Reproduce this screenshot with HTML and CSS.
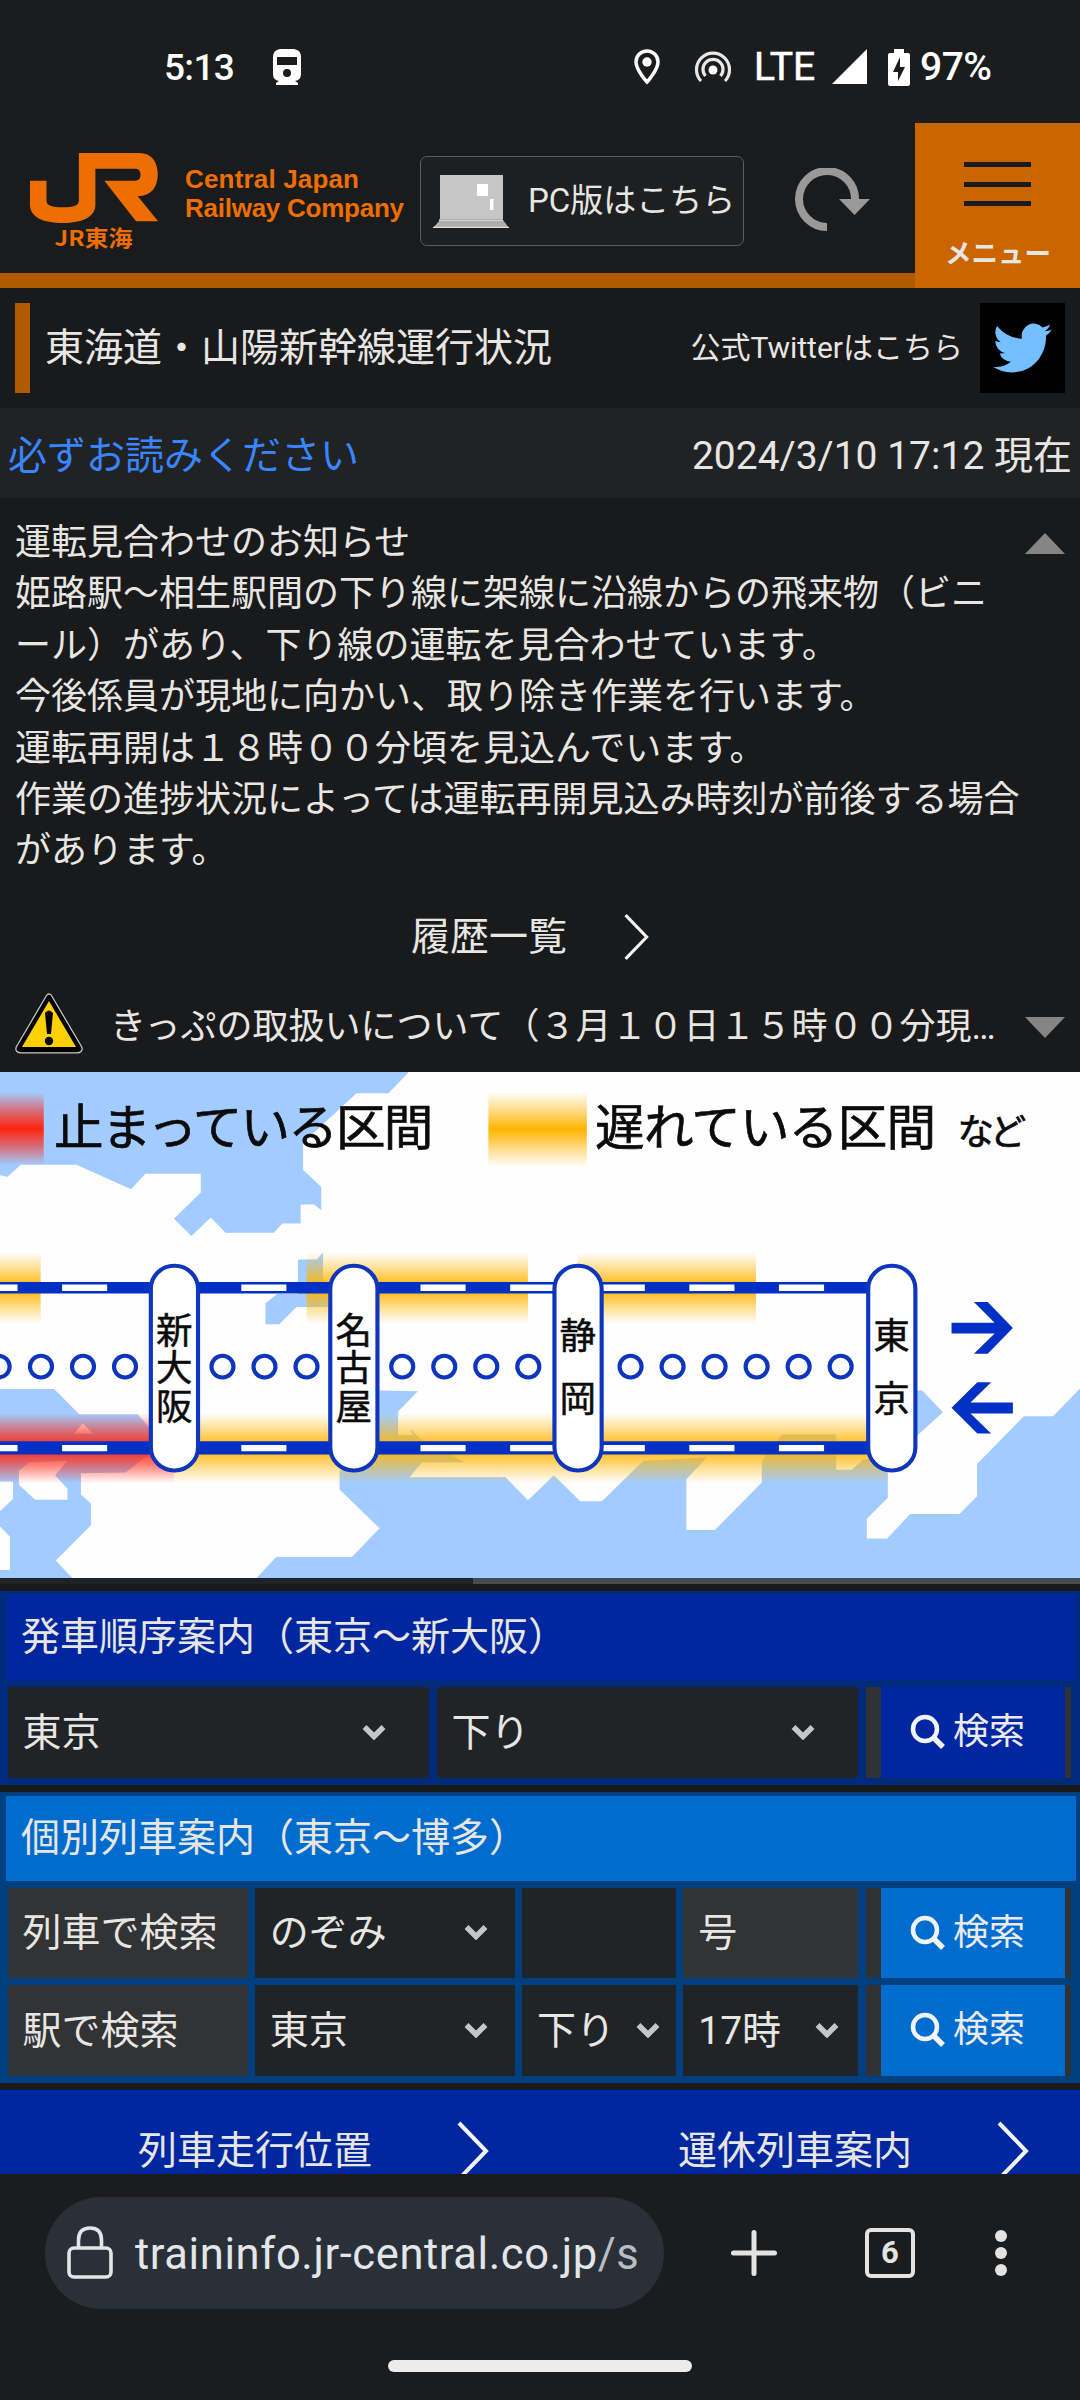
FILE: index.html
```html
<!DOCTYPE html>
<html lang="ja">
<head>
<meta charset="utf-8">
<title>東海道・山陽新幹線運行状況</title>
<link rel="stylesheet" href="styles.css">
</head>
<body>
<svg class="defs" width="0" height="0" aria-hidden="true">
  <symbol id="down" viewBox="0 0 24 16"><path d="M2.500 3 12 12.500 21.500 3" fill="none" stroke="#c4c6c7" stroke-width="5.500"/></symbol>
  <symbol id="search" viewBox="0 0 36 36"><circle cx="15" cy="15" r="12" fill="none" stroke="#f2f3f6" stroke-width="4.500"/><path d="M23.500 23.500 33 33" stroke="#f2f3f6" stroke-width="5.500"/></symbol>
  <symbol id="next" viewBox="0 0 32 60"><path d="M2 2 29 30 2 58" fill="none" stroke="#f4f4f4" stroke-width="4"/></symbol>
</svg>
<div class="screen">
  <div class="status">
    <span class="clock">5:13</span>
    <svg class="train" width="30" height="36" viewBox="0 0 30 36"><path fill="#fff" fill-rule="evenodd" d="M8 0H22Q29 1 29 8V25Q29 31 23 32L26 34V36H4V34L7 32Q1 31 1 25V8Q1 1 8 0ZM5 8V16H25V8ZM15 20A4 4 0 1 0 15 28A4 4 0 1 0 15 20Z"/></svg>
    <span class="spacer"></span>
    <svg class="pin" width="26" height="36" viewBox="0 0 26 36"><path d="M13 2C6.500 2 2 7 2 13C2 21 13 33 13 33S24 21 24 13C24 7 19.500 2 13 2Z" fill="none" stroke="#fff" stroke-width="3.500"/><circle cx="13" cy="13" r="4.700" fill="#fff"/></svg>
    <svg class="cast" width="38" height="34" viewBox="0 0 38 34"><g fill="none" stroke="#e8e8e8" stroke-width="3.200"><path d="M7 31A16.500 16.500 0 1 1 31 31"/><path d="M11.500 26A10 10 0 1 1 26.500 26"/></g><circle cx="19" cy="20" r="4.500" fill="#fff"/></svg>
    <span class="lte">LTE</span>
    <svg class="signal" width="36" height="36" viewBox="0 0 36 36"><path d="M35 0V35H0Z" fill="#fff"/></svg>
    <svg class="battery" width="22" height="37" viewBox="0 0 22 37"><path fill="#fff" d="M6 0H16V4H20Q22 4 22 6V35Q22 37 20 37H2Q0 37 0 35V6Q0 4 2 4H6Z"/><path fill="#1b1c1e" d="M12 8 5 23H10V32L17 18H12Z"/></svg>
    <span class="pct">97%</span>
  </div>

  <header class="header">
    <svg class="logo" width="410" height="150" viewBox="0 123 410 150">
      <g transform="translate(0 110) scale(.34439 .33333)"><path fill="#ee6f00" d="M229 129H405C440 129 458 155 458 193C458 232 440 258 400 259L459 334H395L303 212H392C404 212 408 203 408 194C408 184 404 176 392 176H277V285C277 320 240 339 182 339C124 339 87 320 87 285V212H135V272C135 286 150 292 182 292C214 292 229 286 229 272Z"/></g>
      <text class="logo-ja" x="54.500" y="245.500" textLength="78" lengthAdjust="spacingAndGlyphs">JR東海</text>
      <text class="logo-en" x="185" y="188" textLength="174">Central Japan</text>
      <text class="logo-en" x="185" y="217" textLength="219">Railway Company</text>
    </svg>
    <a class="pc">
      <svg width="76" height="53" viewBox="0 0 76 53"><path fill="#c6c6c6" d="M7 0H70V44H7Z"/><path fill="#adadad" d="M7 45H70L76 53H0Z"/><path d="M6 45H70M0 52.500H76" stroke="#dedede" stroke-width="1.500"/><path fill="#fff" d="M44 9H55V21H44ZM57 24H60.500V35H57Z"/></svg>
      <span>PC版はこちら</span>
    </a>
    <svg class="reload" width="76" height="64" viewBox="0 0 76 64"><path d="M32 59A28 28 0 1 1 60 32" fill="none" stroke="#999" stroke-width="8"/><path d="M44 31H75L59.500 47Z" fill="#999"/></svg>
    <a class="menu"><i></i><i></i><i></i><b>メニュー</b></a>
  </header>

  <section class="title">
    <h1>東海道・山陽新幹線運行状況</h1>
    <span class="tw-label">公式Twitterはこちら</span>
    <span class="tw"><svg width="59" height="50" viewBox="0 2 24 20" preserveAspectRatio="none"><path fill="#74bfff" d="M23.950 4.570a10 10 0 0 1-2.820.770 4.960 4.960 0 0 0 2.160-2.720 9.900 9.900 0 0 1-3.130 1.180 4.920 4.920 0 0 0-8.380 4.480A13.930 13.930 0 0 1 1.640 3.160a4.920 4.920 0 0 0 1.520 6.570 4.900 4.900 0 0 1-2.230-.610v.060a4.920 4.920 0 0 0 3.950 4.830 5 5 0 0 1-2.210.080 4.940 4.940 0 0 0 4.600 3.420A9.870 9.870 0 0 1 0 19.540a14 14 0 0 0 7.550 2.210c9.050 0 14-7.500 14-13.980 0-.210 0-.420-.020-.630a9.940 9.940 0 0 0 2.420-2.570Z"/></svg></span>
  </section>

  <div class="now"><a>必ずお読みください</a><span>2024/3/10 17:12 現在</span></div>

  <section class="notice">
    <p>運転見合わせのお知らせ<br>姫路駅～相生駅間の下り線に架線に沿線からの飛来物（ビニ<br>ール）があり、下り線の運転を見合わせています。<br>今後係員が現地に向かい、取り除き作業を行います。<br>運転再開は１８時００分頃を見込んでいます。<br>作業の進捗状況によっては運転再開見込み時刻が前後する場合<br>があります。</p>
    <svg class="fold" width="40" height="21" viewBox="0 0 40 21"><path fill="#858585" d="M20 0 40 21H0Z"/></svg>
  </section>
  <a class="history"><span>履歴一覧</span><svg width="25" height="48"><use href="#next"/></svg></a>
  <div class="ticket">
    <svg width="68" height="61" viewBox="0 0 68 61"><path d="M34 4 64 55Q65 57 62 57H6Q3 57 4 55Z" fill="#000" stroke="#c8c8c8" stroke-width="7" stroke-linejoin="round"/><path d="M34 4 64 55Q65 57 62 57H6Q3 57 4 55Z" fill="#000" stroke="#000" stroke-width="4.500" stroke-linejoin="round"/><path d="M34 8 61 54H7Z" fill="#fdd000"/><path d="M30 20Q34 15 38 20L36 41H32Z"/><circle cx="34" cy="48" r="4.200"/></svg>
    <span>きっぷの取扱いについて（３月１０日１５時００分現…</span>
    <svg class="open" width="40" height="21" viewBox="0 0 40 21"><path fill="#858585" d="M0 0H40L20 21Z"/></svg>
  </div>

  <svg class="map" width="1080" height="506" viewBox="0 36 3136 1496" preserveAspectRatio="none">
    <defs>
      <linearGradient id="amber" x1="0" y1="0" x2="0" y2="1"><stop offset="0" stop-color="#ffb400" stop-opacity="0"/><stop offset=".2" stop-color="#ffb400" stop-opacity=".38"/><stop offset=".5" stop-color="#ffb400"/><stop offset=".8" stop-color="#ffb400" stop-opacity=".38"/><stop offset="1" stop-color="#ffb400" stop-opacity="0"/></linearGradient>
      <linearGradient id="red" x1="0" y1="0" x2="0" y2="1"><stop offset="0" stop-color="#ff2410" stop-opacity="0"/><stop offset=".25" stop-color="#ff2410" stop-opacity=".55"/><stop offset=".5" stop-color="#ff2410"/><stop offset=".75" stop-color="#ff2410" stop-opacity=".55"/><stop offset="1" stop-color="#ff2410" stop-opacity="0"/></linearGradient>
    </defs>
    <path fill="#fefefe" d="M0 36H3136V1532H0Z"/>
    <g fill="#a2ccff">
      <path d="M0 36H1187L1128 99H1035L880 245V325L933 376V445L912 428H873V484H820L795 511H655L612 466 556 521 505 470 583 392V337H422L381 383 222 310H60L22 346 0 341Z"/>
      <path d="M865 590H920L938 570V650L952 670V731H861L811 782H771V720L805 692H865Z"/>
      <path d="M0 973H157L230 1048H400L440 1095V1160L365 1220 235 1222V1285L264 1312V1376L162 1480 210 1532H0Z"/>
      <path d="M1102 978 1213 980 1156 1040V1110H1200L1190 1090 1220 1120 1350 1190H1225L1190 1234H1468L1533 1302 1568 1268 1608 1228 1685 1305H1748L1868 1185 2053 1175 1993 1240V1390H2076L2212 1250V1185L2270 1108H2428V1212H2473L2508 1180H2578V1295L2517 1357V1415H2576L2643 1343H2786L2837 1290V1195L2973 1054H3058L3136 972V1532H745L802 1470H1022L1102 1385 986 1270V1215L1102 1120Z"/>
      <path d="M2655 978H2678L2738 1042 2655 1118Z"/>
    </g>
    <path fill="#fefefe" d="M0 1247H38V1298L0 1335ZM0 1380 29 1410V1508H0ZM55 1215 85 1190 195 1185 160 1228 196 1268V1301H102L55 1256ZM215 1105 240 1075 270 1105Z"/>
    <rect fill="url(#red)" y="95" width="127" height="217"/>
    <rect fill="url(#red)" y="1045" width="505" height="207"/>
    <path fill="url(#amber)" d="M1418 95H1704V316H1418Z"/>
    <path fill="url(#amber)" d="M0 570H118V780H0ZM890 570H1533V780H890ZM1678 570H2195V780H1678Z"/>
    <path fill="url(#amber)" d="M505 1045H2578V1252H505Z"/>
    <path fill="#0330c4" d="M0 657H2530V691H0ZM0 1128H2530V1167H0Z"/>
    <path stroke="#fff" stroke-width="19" stroke-dasharray="131 129.200" d="M-80 674H2400M-80 1148H2400"/>
    <g fill="#fff" stroke="#0d36bd" stroke-width="12">
      <rect x="438" y="609" width="137" height="605" rx="68"/><rect x="959" y="609" width="137" height="605" rx="68"/><rect x="1610" y="609" width="137" height="605" rx="68"/><rect x="2521" y="609" width="137" height="605" rx="68"/>
    </g>
    <g fill="#fff" stroke="#0d36bd" stroke-width="12">
      <circle cx="-4" cy="907" r="32"/><circle cx="119" cy="907" r="32"/><circle cx="241" cy="907" r="32"/><circle cx="363" cy="907" r="32"/>
      <circle cx="646" cy="907" r="32"/><circle cx="768" cy="907" r="32"/><circle cx="890" cy="907" r="32"/>
      <circle cx="1168" cy="907" r="32"/><circle cx="1290" cy="907" r="32"/><circle cx="1412" cy="907" r="32"/><circle cx="1534" cy="907" r="32"/>
      <circle cx="1831" cy="907" r="32"/><circle cx="1953" cy="907" r="32"/><circle cx="2075" cy="907" r="32"/><circle cx="2197" cy="907" r="32"/><circle cx="2319" cy="907" r="32"/><circle cx="2441" cy="907" r="32"/>
    </g>
    <path fill="#0330c4" d="M2828 716H2868L2941 793 2868 869H2828L2888 809H2763V777H2888ZM2763 1029 2838 953H2878L2818 1013H2941V1046H2818L2878 1105H2838Z"/>
    <g class="legend">
      <text x="157" y="252" textLength="1101">止まっている区間</text>
      <text x="1728" y="252" textLength="990">遅れている区間</text>
      <text class="etc" x="2780" y="253" textLength="200">など</text>
    </g>
    <g class="station">
      <text><tspan x="506" y="839">新</tspan><tspan x="506" y="949">大</tspan><tspan x="506" y="1065">阪</tspan></text>
      <text><tspan x="1027" y="839">名</tspan><tspan x="1027" y="949">古</tspan><tspan x="1027" y="1065">屋</tspan></text>
      <text><tspan x="1678" y="855">静</tspan><tspan x="1678" y="1042">岡</tspan></text>
      <text><tspan x="2589" y="855">東</tspan><tspan x="2589" y="1042">京</tspan></text>
    </g>
  </svg>
  <div class="scroll"><span></span></div>

  <section class="panel order">
    <h2>発車順序案内（東京～新大阪）</h2>
    <div class="row">
      <span class="cell select wide">東京<svg><use href="#down"/></svg></span>
      <span class="cell select wide">下り<svg><use href="#down"/></svg></span>
      <span class="cell go"><button><svg><use href="#search"/></svg>検索</button></span>
    </div>
  </section>

  <section class="panel single">
    <h2>個別列車案内（東京～博多）</h2>
    <div class="row">
      <span class="cell label">列車で検索</span>
      <span class="cell select">のぞみ<svg><use href="#down"/></svg></span>
      <span class="cell"></span>
      <span class="cell label">号</span>
      <span class="cell go"><button><svg><use href="#search"/></svg>検索</button></span>
    </div>
    <div class="row">
      <span class="cell label">駅で検索</span>
      <span class="cell select">東京<svg><use href="#down"/></svg></span>
      <span class="cell select tight">下り<svg><use href="#down"/></svg></span>
      <span class="cell select snug">17時<svg><use href="#down"/></svg></span>
      <span class="cell go"><button><svg><use href="#search"/></svg>検索</button></span>
    </div>
  </section>

  <nav class="links">
    <a>列車走行位置<svg><use href="#next"/></svg></a>
    <a>運休列車案内<svg><use href="#next"/></svg></a>
  </nav>

  <footer class="browser">
    <div class="tools">
      <div class="address">
        <svg width="46" height="53" viewBox="0 0 46 53"><g fill="none" stroke="#e3e6e9" stroke-width="3.600"><rect x="2" y="22" width="42" height="29" rx="5"/><path d="M11.500 22V14Q11.500 2 23 2T34.500 14V22"/></g></svg>
        <span>traininfo.jr-central.co.jp<em>/s</em></span>
      </div>
      <svg class="plus" width="46" height="46" viewBox="0 0 46 46"><path d="M23 2.500V43.500M2.500 23H43.500" stroke="#e3e3e3" stroke-width="5" stroke-linecap="round"/></svg>
      <span class="tabs">6</span>
      <span class="dots"><i></i><i></i><i></i></span>
    </div>
    <div class="home"></div>
  </footer>
</div>
</body>
</html>
```
FILE: styles.css
```css
* { box-sizing: border-box; }
body {
  margin: 0;
  background: #1b1c1e;
  color: #e8e6e3;
  font-family: Roboto, "Noto Sans CJK JP", sans-serif;
}
svg { display: block; flex: none; }
.defs { position: absolute; }
.screen {
  display: flex;
  flex-direction: column;
  width: 1080px;
  height: 2400px;
  overflow: hidden;
  background: #191a1c;
}

/* Android status bar */
.status {
  display: flex;
  align-items: center;
  height: 123px;
  padding: 11px 84px 0 164px;
  background: #1b1c1e;
  color: #fff;
  font: 500 38px/1 Roboto, sans-serif;
}
.clock { width: 108px; font-size: 37px; letter-spacing: -.7px; }
.spacer { flex: 1; }
.pin { margin-right: 34px; }
.cast { margin-right: 22px; }
.lte { width: 78px; font-size: 39px; font-weight: 400; -webkit-text-stroke: .6px #fff; }
.signal { margin-right: 20px; }
.battery { margin-right: 10px; }
.pct { width: 76px; font-size: 39px; letter-spacing: -.5px; white-space: nowrap; }

/* Site header */
.header {
  display: flex;
  height: 165px;
  background: linear-gradient(#191b1c 0 150px, #b15b00 150px);
}
.logo text { fill: #ee6f00; }
.logo-ja { font: 700 21.500px "Noto Sans CJK JP", sans-serif; }
.logo-en { font: 700 26px "Liberation Sans", sans-serif; }
.pc {
  display: flex;
  align-items: center;
  gap: 19px;
  width: 324px;
  height: 90px;
  margin: 33px 51px 0 10px;
  padding-left: 12px;
  border: 1px solid #5b5e60;
  border-radius: 7px;
  background: #1d1f20;
  font-size: 33px;
  white-space: nowrap;
}
.pc span { margin-bottom: 6px; }
.reload { margin-top: 45px; }
.menu {
  display: flex;
  flex-direction: column;
  align-items: center;
  width: 165px;
  margin-left: auto;
  padding: 39px 0 0;
  background: #cb6500;
}
.menu i { width: 67px; height: 5px; margin-bottom: 14.500px; background: #1a1b1d; }
.menu b { margin: 13px 0 0 1px; font-size: 26.500px; line-height: 40px; }

.title {
  display: flex;
  align-items: center;
  height: 120px;
  padding: 0 15px;
}
h1, h2, p { margin: 0; font-weight: 400; }
h1 {
  flex: 1;
  height: 90px;
  padding-left: 15px;
  border-left: 15px solid #b15b00;
  font-size: 39px;
  line-height: 90px;
}
.tw-label { margin: 0 17px 7px 0; font-size: 30px; }
.tw {
  display: flex;
  align-items: center;
  justify-content: center;
  width: 85px;
  height: 90px;
  background: #000;
}
.now {
  display: flex;
  justify-content: space-between;
  height: 90px;
  padding: 0 8px;
  background: #202224;
  font-size: 39px;
  line-height: 96px;
}
.now a { color: #3985ff; }

.notice {
  display: flex;
  justify-content: space-between;
  height: 391px;
  padding: 20px 15px 0;
  font-size: 36px;
  line-height: 51.400px;
  white-space: nowrap;
}
.fold { margin-top: 15px; }
.history {
  display: flex;
  justify-content: center;
  align-items: center;
  gap: 57px;
  height: 95px;
  padding-right: 20px;
  font-size: 39px;
}
.history span { margin-bottom: 8px; }
.ticket {
  display: flex;
  align-items: center;
  height: 88px;
  padding: 0 15px 10px;
  font-size: 36px;
}
.ticket span { flex: 1; margin-left: 27px; white-space: nowrap; }
.open { margin-top: 8px; }

/* Line map */
.legend { font: 400 144px "Noto Sans CJK JP", sans-serif; fill: #0b0b0b; stroke: #0b0b0b; stroke-width: 2; }
.legend .etc { font-size: 106px; }
.station { font: 400 106px "Noto Sans CJK JP", sans-serif; fill: #0b0b0b; stroke: #0b0b0b; stroke-width: 1.5; text-anchor: middle; }
.scroll { display: flex; justify-content: flex-end; height: 6px; background: #1f2326; }
.scroll span { width: 607px; background: #494c4e; }

/* Search panels */
.panel {
  display: flex;
  flex-direction: column;
  gap: 7px;
  padding-bottom: 7px;
  margin-top: 7px;
  font-size: 39px;
}
.order { --accent: #0027a0; --frame: #002b7c; background: var(--frame); }
.single { --accent: #006dce; --frame: #004080; background: var(--frame); }
.panel h2 {
  height: 89px;
  padding-left: 15px;
  border: solid var(--frame);
  border-width: 4px 4px 0 6px;
  background: var(--accent);
  font-size: 39px;
  line-height: 85px;
}
.row {
  display: grid;
  grid-template-columns: 240px 260px 154px 175px 205px;
  column-gap: 7.250px;
  height: 90.500px;
  padding-left: 7.500px;
}
.order .row { grid-template-columns: 421.500px 421.500px 205px; column-gap: 7.500px; }
.cell {
  display: flex;
  align-items: center;
  justify-content: space-between;
  padding: 0 0 7px 15px;
  background: #212426;
  white-space: nowrap;
}
.label { background: #313335; }
.select { padding-right: 27px; }
.select svg { width: 24px; height: 16px; margin-top: 6px; }
.wide { padding-right: 43px; }
.tight { padding-right: 16px; }
.snug { padding-right: 19px; }
.go { padding: 0 6px 0 15px; background: #303233; }
button {
  display: flex;
  align-items: center;
  justify-content: center;
  gap: 7px;
  width: 184px;
  height: 100%;
  padding: 0 10px 0 0;
  border: 0;
  background: var(--accent);
  color: #eceaf0;
  font: 36px/1 Roboto, "Noto Sans CJK JP", sans-serif;
}
button svg { width: 36px; height: 36px; }

.links { display: flex; height: 84px; margin-top: 7px; overflow: hidden; background: #0027a0; }
.links a {
  display: flex;
  align-items: center;
  justify-content: space-between;
  width: 540px;
  height: 114px;
  padding: 0 50px 0 138px;
  border-right: 1px solid #02299a;
  font-size: 39px;
}
.links svg { width: 32px; height: 60px; margin-top: 8px; }

/* Browser toolbar */
.browser { flex: 1; background: #1b1c1e; }
.tools { display: flex; align-items: center; height: 158px; padding: 0 0 0 45px; }
.address {
  display: flex;
  align-items: center;
  width: 619px;
  height: 112px;
  padding-left: 22px;
  border-radius: 56px;
  background: #2a3037;
  color: #e3e6e9;
  font-size: 43.500px;
  letter-spacing: .6px;
}
.address span { margin: 3px 0 0 22px; white-space: nowrap; }
.address em { color: #b9bec4; font-style: normal; }
.plus { margin-left: 67px; }
.tabs {
  width: 50px;
  height: 50px;
  margin-left: 88px;
  border: 4px solid #e3e3e3;
  border-radius: 6px;
  color: #e3e3e3;
  font-size: 31px;
  font-weight: 700;
  line-height: 42px;
  text-align: center;
}
.dots { display: flex; flex-direction: column; gap: 5px; margin-left: 80px; }
.dots i { width: 12px; height: 12px; border-radius: 50%; background: #e3e3e3; }
.home { width: 304px; height: 12px; margin: 28px auto 0; border-radius: 6px; background: #ececec; }
```
